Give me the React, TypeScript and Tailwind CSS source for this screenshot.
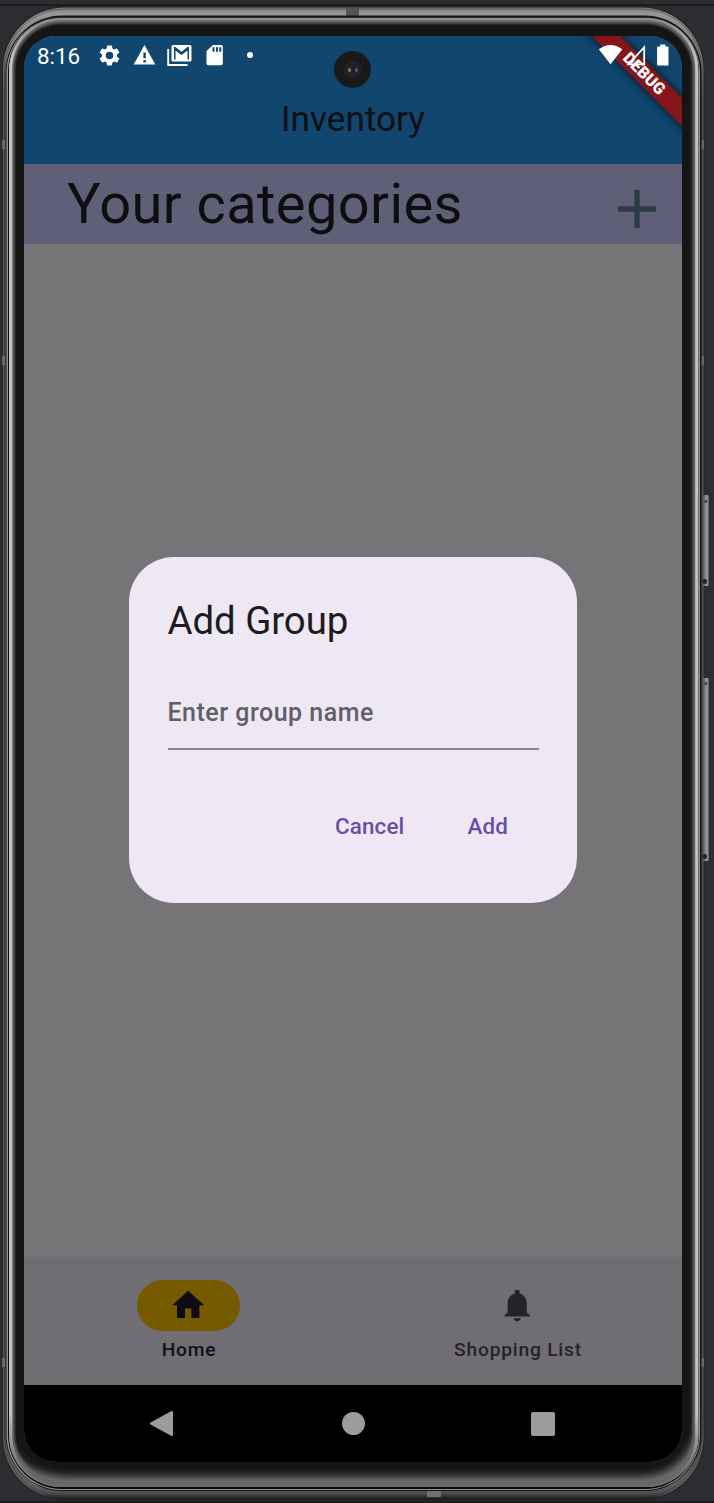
import React from "react";

const SETTINGS =
  "M19.14 12.94c.04-.3.06-.61.06-.94 0-.32-.02-.64-.07-.94l2.03-1.58a.49.49 0 0 0 .12-.61l-1.92-3.32a.49.49 0 0 0-.59-.22l-2.39.96c-.5-.38-1.03-.7-1.62-.94l-.36-2.54a.48.48 0 0 0-.48-.41h-3.84a.47.47 0 0 0-.47.41l-.36 2.54c-.59.24-1.13.57-1.62.94l-2.39-.96a.48.48 0 0 0-.59.22L2.74 8.87a.48.48 0 0 0 .12.61l2.03 1.58c-.05.3-.09.63-.09.94s.02.64.07.94l-2.03 1.58a.49.49 0 0 0-.12.61l1.92 3.32c.12.22.37.29.59.22l2.39-.96c.5.38 1.03.7 1.62.94l.36 2.54c.05.24.24.41.48.41h3.84c.24 0 .44-.17.47-.41l.36-2.54c.59-.24 1.13-.56 1.62-.94l2.39.96c.22.08.47 0 .59-.22l1.92-3.32a.48.48 0 0 0-.12-.61l-2.01-1.58zM12 15.6A3.6 3.6 0 1 1 12 8.4a3.6 3.6 0 0 1 0 7.2z";

function Frame() {
  return (
    <svg aria-hidden="true" className="absolute inset-0 h-[1503px] w-[714px]" viewBox="0 0 714 1503">
      <defs>
        <linearGradient id="rim" x1="0" y1="0" x2="0" y2="1">
          <stop offset="0" stopColor="#777" />
          <stop offset="0.004" stopColor="#979797" />
          <stop offset="0.03" stopColor="#777" />
          <stop offset="0.06" stopColor="#565656" />
          <stop offset="0.95" stopColor="#565656" />
          <stop offset="0.99" stopColor="#606060" />
          <stop offset="0.996" stopColor="#4c4c4c" />
          <stop offset="1" stopColor="#161616" />
        </linearGradient>
        <linearGradient id="btn" x1="0" y1="0" x2="1" y2="0">
          <stop offset="0" stopColor="#464646" />
          <stop offset="0.4" stopColor="#777" />
          <stop offset="0.7" stopColor="#a0a0a0" />
          <stop offset="1" stopColor="#555" />
        </linearGradient>
        <linearGradient id="shine" x1="0" y1="0" x2="0" y2="1">
          <stop offset="0" stopColor="#8c8c8c" />
          <stop offset="0.03" stopColor="#c2c2c2" />
          <stop offset="0.95" stopColor="#c2c2c2" />
          <stop offset="0.985" stopColor="#757575" />
          <stop offset="1" stopColor="#6c6c6c" />
        </linearGradient>
        <filter id="soft" x="-5%" y="-5%" width="110%" height="110%">
          <feGaussianBlur stdDeviation="1" />
        </filter>
        <filter id="softer" filterUnits="userSpaceOnUse" x="0" y="1380" width="714" height="123">
          <feGaussianBlur stdDeviation="4" />
        </filter>
        <clipPath id="inside">
          <rect x="9" y="18" width="689.5" height="1469" rx="52" />
        </clipPath>
      </defs>
      <rect x="0" y="4" width="714" height="2" fill="#1b1c20" />
      <rect x="0" y="1501" width="714" height="2" fill="#1e1b24" />
      <rect x="2" y="6" width="702.5" height="1494.5" rx="63" fill="#242424" />
      <rect x="3" y="7.5" width="700.5" height="1492" rx="62" fill="url(#rim)" />
      <rect x="4.5" y="9" width="697.5" height="1488" rx="60" fill="none" stroke="#333" strokeWidth="0.5" />
      <rect x="346" y="8" width="13" height="8" fill="#555" />
      <rect x="427" y="1490" width="14" height="7" rx="1" fill="#707070" />
      <rect x="2" y="140" width="4" height="9" fill="#666" />
      <rect x="2" y="356" width="4" height="9" fill="#666" />
      <rect x="2" y="1358" width="4" height="9" fill="#666" />
      <rect x="701" y="140" width="3" height="9" fill="#666" />
      <rect x="701" y="356" width="3" height="9" fill="#666" />
      <rect x="701" y="1358" width="3" height="9" fill="#666" />
      <rect x="702" y="495" width="7" height="91" rx="1.500" fill="url(#btn)" />
      <rect x="704.5" y="500" width="2.500" height="3" fill="#444" />
      <rect x="702.5" y="579" width="4.500" height="5" rx="2" fill="#252525" />
      <rect x="702" y="678" width="7" height="183" rx="1.500" fill="url(#btn)" />
      <rect x="704.5" y="682" width="2.500" height="3" fill="#444" />
      <rect x="702.5" y="854" width="4.500" height="5" rx="2" fill="#252525" />
      <rect x="5.5" y="15.5" width="696" height="1475.5" rx="57" fill="#151515" />
      <rect x="6.5" y="17.5" width="693.5" height="1472.5" rx="55" fill="#929292" />
      <rect x="8" y="17.5" width="691" height="1471.5" rx="54" fill="#0b0b0b" />
      <rect x="9" y="18" width="689.5" height="1469" rx="52" fill="#151515" />
      <g clipPath="url(#inside)">
        <path d="M-6 1400 V1426 Q2 1484 70 1486 H640 Q694 1484 708 1426" fill="none" stroke="#777" strokeWidth="18" filter="url(#softer)" />
        <rect x="10" y="19" width="687" height="1466" rx="51" fill="none" stroke="#666" strokeWidth="9" filter="url(#soft)" />
        <rect x="10.5" y="18.5" width="686.5" height="1468" rx="51" fill="none" stroke="url(#shine)" strokeWidth="3.5" />
      </g>
    </svg>
  );
}

function StatusBar() {
  return (
    <div className="relative z-10 flex h-[38px] items-center pl-[13px] text-white">
      <span className="mt-[2px] w-[60px] text-[22.4px] leading-none">8:16</span>
      <svg className="h-[25px] w-[25px]" viewBox="0 0 24 24" fill="currentColor"><path d={SETTINGS} /></svg>
      <svg className="ml-[11px] h-[24px] w-[23px]" viewBox="0 0 23 24" fill="currentColor">
        <path fillRule="evenodd" d="M11.5 2 L22.3 21.5 H.7Z M10.4 9.5h2.4v5.7h-2.4Z M10.4 17h2.4v2.4h-2.4Z" />
      </svg>
      <svg className="ml-[11px] h-[24px] w-[25px]" viewBox="0 0 25 24" fill="none">
        <path d="M1.200 6V22H20.500" stroke="currentColor" strokeWidth="1.9" />
        <path fill="currentColor" fillRule="evenodd" d="M6 2h17a1.500 1.500 0 0 1 1.500 1.500v13.600a1.500 1.500 0 0 1-1.500 1.500H6a1.500 1.500 0 0 1-1.500-1.500V3.500A1.500 1.500 0 0 1 6 2Z M7 4v12.500h1.500V7.500l6 4.500 6-4.500v9h1.500V4h-1.500l-6 4.700L8.500 4Z" />
      </svg>
      <svg className="ml-[14px] h-[24px] w-[18px]" viewBox="0 0 18 24" fill="currentColor">
        <path fillRule="evenodd" d="M7 2h8a1.800 1.800 0 0 1 1.800 1.800v16.700a1.800 1.800 0 0 1-1.800 1.800H2.300a1.800 1.800 0 0 1-1.800-1.800V8Z M6.500 4.200v4.500h2V4.200Z M10 4.200v4.500h2V4.200Z M13.300 4.200v4.500h2V4.200Z" />
      </svg>
      <span className="ml-[23px] h-[6px] w-[6px] rounded-full bg-white" />
      <svg className="mr-[12px] ml-auto h-[24px] w-[72px]" viewBox="0 0 72 24" fill="currentColor">
        <path d="M.8 6.200Q12.500-2.300 24.300 6.200L12.500 21.300Z" />
        <path d="M46.200 4.200V21.300H30.500Z" fill="none" stroke="currentColor" strokeWidth="1.800" />
        <path d="M62.300 1.600h5v1.800h2.300a.9.9 0 0 1 .9.9v17.400a.9.900 0 0 1-.9.900H60a.9.900 0 0 1-.9-.9V4.300a.9.900 0 0 1 .9-.9h2.300Z" />
      </svg>
    </div>
  );
}

function AddGroupDialog() {
  return (
    <div className="absolute top-[521px] left-[105px] flex h-[345.500px] w-[448px] flex-col rounded-[45px] bg-[#eee8f4] px-[38.500px] pt-[38px]">
      <h2 className="text-[38.4px] leading-[51px] tracking-[-0.05px] text-[#1d1b20]">Add Group</h2>
      <div className="mt-[26px] flex h-[78px] items-center border-b-2 border-[#8b8592] pt-[5px] text-[25px] font-medium tracking-[0.5px] text-[#626066]">
        <span>Enter group name</span>
      </div>
      <div className="mt-[57px] flex justify-end gap-[63px] pr-[30.500px] text-[22.4px] leading-[38px] font-medium tracking-[0.16px] text-[#6550a4]">
        <button>Cancel</button>
        <button>Add</button>
      </div>
    </div>
  );
}

export default function App() {
  return (
    <div className="relative h-[1503px] w-[714px] overflow-hidden bg-[#2c2d31] pt-[36px] pl-[24px] font-['Roboto',sans-serif]">
      <Frame />
      <main className="relative flex h-[1426px] w-[658px] flex-col overflow-hidden rounded-[32px] bg-[#767477]">
        <header className="h-[128px] bg-[#11466f]">
          <StatusBar />
          <h1 className="mt-[24px] text-center text-[35.2px] leading-[42px] text-[#0e1013]">Inventory</h1>
        </header>
        <section className="flex h-[80px] items-center justify-between bg-[#5f6077] pr-[26px] pl-[43px]">
          <h2 className="text-[56px] leading-[80px] tracking-[0.4px] text-[#0e0e10]">Your categories</h2>
          <svg className="mt-[9px] h-[38px] w-[38px]" viewBox="0 0 38 38" fill="#2d3c44"><path d="M16.300 0h5.400v16.300H38v5.400H21.700V38h-5.400V21.700H0v-5.400h16.300Z" /></svg>
        </section>
        <div className="flex-1" />
        <nav className="grid h-[128px] grid-cols-2 bg-[#706e73] pt-[23px] text-[19.2px] font-medium tracking-[0.8px]">
          <div className="flex flex-col items-center text-[#111114]">
            <span className="flex h-[51px] w-[103px] items-center justify-center rounded-full bg-[#765a00]">
              <svg className="h-[38.400px] w-[38.400px]" viewBox="0 0 24 24" fill="#0e0b15"><path d="M10 20v-6h4v6h5v-8h3L12 3 2 12h3v8z" /></svg>
            </span>
            <span className="mt-[5px] pl-px leading-[28px]">Home</span>
          </div>
          <div className="flex flex-col items-center text-[#252328]">
            <span className="flex h-[51px] items-center">
              <svg className="h-[38.400px] w-[38.400px]" viewBox="0 0 24 24" fill="currentColor"><path d="M18 16.500v-5.500c0-3.070-1.630-5.640-4.500-6.320V2.500h-3v2.180C7.640 5.360 6 7.920 6 11v5.500l-2 1.800v.7h16v-.7ZM9.800 20.200h4.400c-.2 1-.9 1.800-2.200 1.800s-2-.8-2.200-1.800Z" /></svg>
            </span>
            <span className="mt-[5px] pl-px leading-[28px]">Shopping List</span>
          </div>
        </nav>
        <div className="flex h-[77px] items-center bg-black pl-[125px]">
          <svg className="h-[27px] w-[25px]" viewBox="0 0 25 27"><path d="M2 13.500 23 2V25Z" fill="#9c9c9c" stroke="#9c9c9c" strokeWidth="2" strokeLinejoin="round" /></svg>
          <span className="ml-[167.500px] h-[23px] w-[23px] rounded-full bg-[#9c9c9c]" />
          <span className="ml-[166px] h-[24px] w-[24px] rounded-[2px] bg-[#9c9c9c]" />
        </div>
        <div className="absolute top-[28px] left-[520px] flex h-[20px] w-[200px] rotate-45 items-center justify-center bg-[#84161a] text-[16.300px] leading-none font-black text-white shadow-[0_0_10px_rgba(0,0,0,0.75)]">
          DEBUG
        </div>
        <div className="absolute top-[15px] left-[310px] flex h-[37px] w-[37px] items-center justify-center rounded-full bg-[#19191a]">
          <span className="flex h-[17px] w-[17px] items-center justify-center gap-[4px] rounded-full border border-[#272729] bg-[#202124]">
            <span className="h-[4px] w-[3px] rounded-full bg-[#638087]" />
            <span className="h-[4px] w-[3px] rounded-full bg-[#4e568b]" />
          </span>
        </div>
        <AddGroupDialog />
      </main>
    </div>
  );
}
